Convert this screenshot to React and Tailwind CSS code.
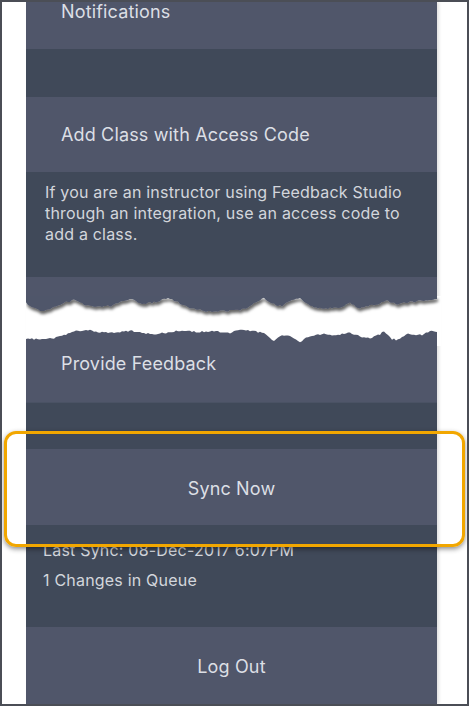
import React from "react";

const topEdge = [
  [0, 7], [8, 12], [14, 15], [24, 13], [32, 9], [40, 6], [48, 4], [58, 9], [70, 10], [84, 10],
  [96, 5], [106, 3], [116, 8], [130, 6], [142, 2], [152, 6], [164, 12], [180, 15], [200, 15],
  [220, 13], [230, 6], [238, 2], [246, 8], [256, 10], [266, 4], [274, 2], [284, 10], [298, 13],
  [314, 11], [324, 7], [332, 12], [348, 9], [360, 5], [372, 8], [384, 6], [398, 4], [411, 3],
];

const bottomEdge = [
  [0, 43], [14, 43], [28, 42], [40, 38], [50, 35], [64, 34], [78, 37], [92, 36], [106, 35],
  [124, 38], [140, 37], [156, 34], [172, 36], [188, 35], [204, 37], [214, 33], [228, 35],
  [240, 38], [248, 45], [256, 39], [266, 41], [274, 46], [284, 40], [296, 38], [310, 39],
  [324, 37], [336, 41], [346, 42], [358, 36], [366, 43], [372, 44], [382, 38], [396, 39],
  [404, 35], [411, 36],
];

// add small deterministic jitter so the edge looks torn
const jag = (pts) => {
  const out = [];
  for (let i = 0; i < pts.length - 1; i++) {
    const [x1, y1] = pts[i];
    const [x2, y2] = pts[i + 1];
    const steps = Math.max(2, Math.round((x2 - x1) / 2));
    for (let s = 0; s < steps; s++) {
      const t = s / steps;
      const x = x1 + (x2 - x1) * t;
      const n = Math.sin(x * 12.9898 + y1 * 78.233) * 43758.5453;
      const j = (n - Math.floor(n) - 0.5) * 1.8;
      out.push([x, y1 + (y2 - y1) * t + j]);
    }
  }
  out.push(pts[pts.length - 1]);
  return out;
};

const Tear = () => {
  const top = jag(topEdge);
  const bottom = jag(bottomEdge);
  const topPath =
    "M0,0 L411,0 " + top.slice().reverse().map(([x, y]) => `L${x.toFixed(1)},${y.toFixed(1)}`).join(" ") + " Z";
  const bottomPath =
    "M0,50 L411,50 " + bottom.slice().reverse().map(([x, y]) => `L${x.toFixed(1)},${y.toFixed(1)}`).join(" ") + " Z";
  return (
    <svg width="415" height="50" viewBox="0 0 415 50" className="block">
      <defs>
        <filter id="tearShadow" x="-5%" y="-20%" width="110%" height="160%">
          <feDropShadow dx="1" dy="3" stdDeviation="1.6" floodColor="#000" floodOpacity="0.6" />
        </filter>
      </defs>
      <rect x="0" y="0" width="415" height="50" fill="#ffffff" />
      <path d={bottomPath} fill="#50566a" />
      <path d={topPath} fill="#50566a" filter="url(#tearShadow)" />
    </svg>
  );
};

const Row = ({ children, className }) => (
  <div className={"bg-[#50566a] text-[#dcdfe5] text-[18px] tracking-[0.15px] " + className}>{children}</div>
);

export default function App() {
  return (
    <div
      className="relative w-[469px] h-[706px] bg-white border-2 border-[#4b4e56] overflow-hidden"
      style={{ fontFamily: "Inter, 'Noto Sans', sans-serif" }}
    >
      <div className="ml-[24px] w-[411px] flex flex-col shadow-[2px_0_3px_rgba(0,0,0,0.12)]">
        <Row className="h-[47px] pl-[35px] leading-[20px]">Notifications</Row>
        <div className="h-[48px] bg-[#404959]" />
        <Row className="h-[75px] pl-[35px] flex items-center">Add Class with Access Code</Row>
        <div className="h-[105px] bg-[#404959] pl-[19px] pr-[20px] pt-[10px] text-[16px] tracking-[0.2px] leading-[21px] text-[#d3d6dc]">
          If you are an instructor using Feedback Studio through an integration, use an access code to add a class.
        </div>
        <div className="h-[19px] bg-[#50566a]" />
        <Tear />
        <Row className="h-[56px] pl-[35px] pt-[8px] leading-[20px]">Provide Feedback</Row>
        <div className="h-[47px] bg-[#404959] border-t border-[#4a5264]" />
        <Row className="h-[76px] pt-[2px] flex items-center justify-center">Sync Now</Row>
        <div className="h-[102px] bg-[#404959] pl-[17px] pt-[15px] text-[16px] tracking-[0.2px] leading-[20px] text-[#d3d6dc]">
          <div>Last Sync: 08-Dec-2017 6:07PM</div>
          <div className="mt-[10px]">1 Changes in Queue</div>
        </div>
        <Row className="h-[77px] pt-[2px] flex items-center justify-center">Log Out</Row>
      </div>

      <div className="absolute left-[2px] top-[429px] w-[461px] h-[116px] rounded-[12px] border-[3px] border-[#f2a700] shadow-[0_2px_5px_rgba(0,0,0,0.45)]" />
    </div>
  );
}
